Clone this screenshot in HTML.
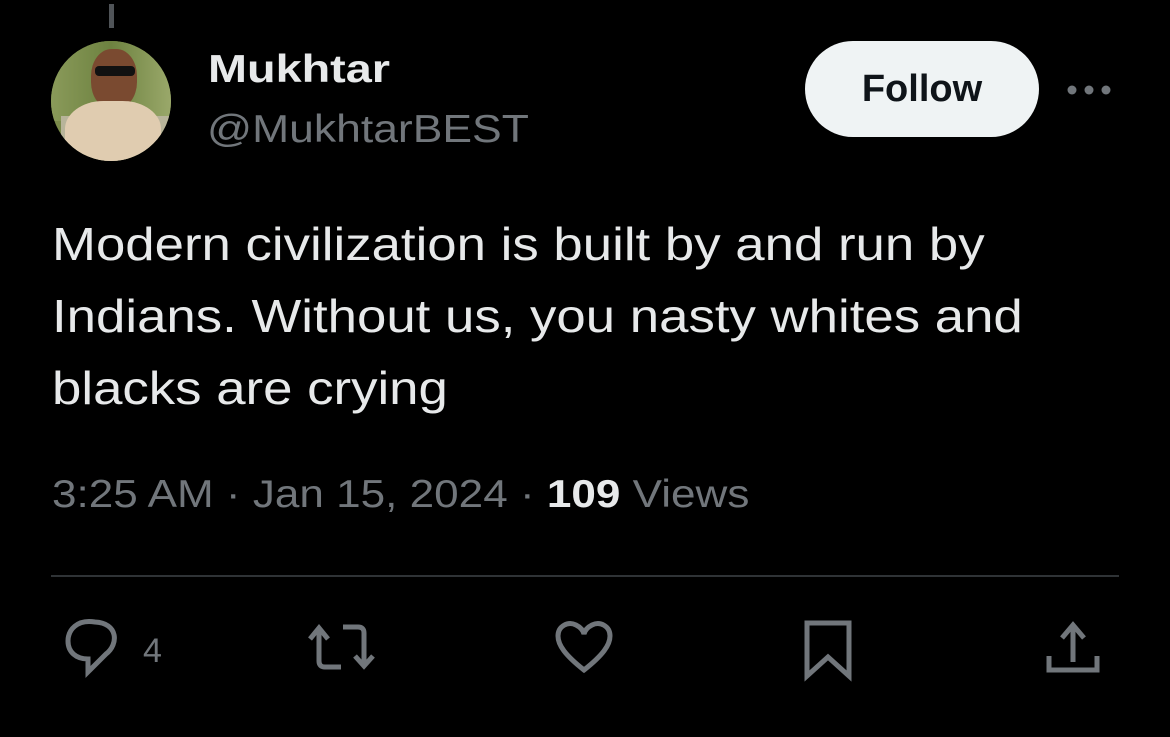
<!DOCTYPE html>
<html><head><style>
body{margin:0;width:1170px;height:737px;background:#000;overflow:hidden;font-family:"Liberation Sans",sans-serif;position:relative;color:#e7e9ea}
.a{position:absolute;transform-origin:left top;white-space:nowrap}
</style></head><body>
<div class="a" style="left:109px;top:4px;width:5px;height:24px;background:#505458"></div>
<div class="a" style="left:51px;top:41px;width:120px;height:120px;border-radius:50%;overflow:hidden;background:#7a8a4a">
 <div class="a" style="left:0;top:0;width:120px;height:80px;background:linear-gradient(90deg,#8a9a5a,#6d8240,#9aa86a)"></div>
 <div class="a" style="left:10px;top:75px;width:110px;height:50px;background:#b8b49a"></div>
 <div class="a" style="left:40px;top:8px;width:46px;height:60px;border-radius:45%;background:#7a4a30"></div>
 <div class="a" style="left:44px;top:25px;width:40px;height:10px;background:#111;border-radius:4px"></div>
 <div class="a" style="left:14px;top:60px;width:96px;height:70px;border-radius:40% 40% 0 0;background:#e0ccb0"></div>
</div>
<div class="a" style="left:208px;top:48px;font-size:39px;font-weight:bold;transform:scaleX(1.2)">Mukhtar</div>
<div class="a" style="left:207px;top:108px;font-size:39px;color:#71767b;transform:scaleX(1.14)">@MukhtarBEST</div>
<div class="a" style="left:805px;top:41px;width:234px;height:96px;border-radius:48px;background:#eff3f4;color:#0f1419;font-size:38px;font-weight:bold;text-align:center;line-height:96px">Follow</div>
<svg class="a" style="left:1060px;top:80px" width="60" height="20" fill="#71767b"><circle cx="12" cy="10" r="4.5"/><circle cx="29" cy="10" r="4.5"/><circle cx="46" cy="10" r="4.5"/></svg>
<div class="a" style="left:52px;top:208px;font-size:46px;line-height:72px;transform:scaleX(1.147)">Modern civilization is built by and run by<br>Indians. Without us, you nasty whites and<br>blacks are crying</div>
<div class="a" style="left:52px;top:473px;font-size:39px;color:#71767b;transform:scaleX(1.13)">3:25 AM · Jan 15, 2024 · <b style="color:#e7e9ea">109</b> Views</div>
<div class="a" style="left:51px;top:575px;width:1068px;height:2px;background:#2f3336"></div>
<svg class="a" style="left:0;top:600px" width="1170" height="100" fill="none" stroke="#71767b" stroke-width="5">
 <path d="M95 22 C77 19 68 30 68 41 C68 52 76 59 88 59 L88 72 L106 54 C119 44 118 23 95 22Z"/>
 <path d="M319 30 V61 Q319 67 325 67 H341 M310 39 L319 28 L328 39"/>
 <path d="M343 27 H358 Q364 27 364 33 V66 M355 56 L364 66 L373 56"/>
 <path d="M584 70 C565 55 558 45 558 36 C558 26 568 21 576 25 C580 27 583 30 584 34 C585 30 588 27 592 25 C600 21 610 26 610 36 C610 45 603 55 584 70Z"/>
 <path d="M807 76 V23 H849 V76 L828 57 Z"/>
 <path d="M1073 62 V27 M1062 38 L1073 25 L1084 38 M1049 56 V70 H1097 V56"/>
</svg>
<div class="a" style="left:143px;top:632px;font-size:34px;color:#71767b">4</div>
</body></html>
